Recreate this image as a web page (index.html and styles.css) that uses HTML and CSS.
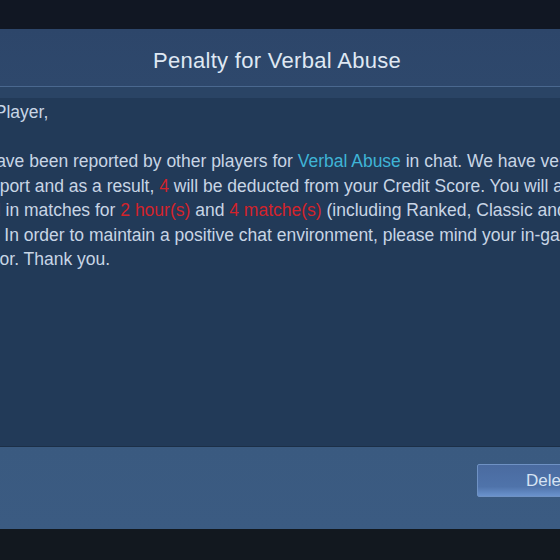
FILE: index.html
```html
<!DOCTYPE html>
<html lang="en">
<head>
    <meta charset="UTF-8">
    <meta name="viewport" content="width=device-width, initial-scale=1.0">
    <title>Penalty for Verbal Abuse</title>
    <link rel="stylesheet" href="styles.css">
</head>
<body>
    <div class="screen">
        <div class="top-bar"></div>
        <div class="dialog">
            <div class="dialog-header">
                <h1>Penalty for Verbal Abuse</h1>
            </div>
            <div class="dialog-body">
                <p class="line">Dear Player,</p>
                <p class="line blank">&nbsp;</p>
                <p class="line">You have been reported by other players for <span class="hl-blue">Verbal Abuse</span> in chat. We have verified</p>
                <p class="line">this report and as a result, <span class="hl-red">4</span> will be deducted from your Credit Score. You will also be</p>
                <p class="line">muted in matches for <span class="hl-red">2 hour(s)</span> and <span class="hl-red">4 matche(s)</span> (including Ranked, Classic and Brawl).</p>
                <p class="line shift-lg">Brawl). In order to maintain a positive chat environment, please mind your in-game</p>
                <p class="line shift-sm">behavior. Thank you.</p>
            </div>
            <div class="dialog-footer">
                <button class="delete-button">Delete</button>
            </div>
        </div>
        <div class="bottom-bar"></div>
    </div>
</body>
</html>
```

FILE: styles.css
```css
body {
    margin: 0;
    background-color: #11161f;
    font-family: "Liberation Sans", Arial, sans-serif;
    overflow: hidden;
}
.screen {
    width: 560px;
    height: 560px;
    overflow: hidden;
    display: flex;
    flex-direction: column;
}
.top-bar {
    height: 29px;
    background-color: #111723;
}
.dialog {
    width: 700px;
    margin-left: -73px;
    display: flex;
    flex-direction: column;
}
.dialog-header {
    height: 51px;
    padding-top: 6px;
    background: linear-gradient(#2d466a, #2e486c);
    border-bottom: 1px solid #4a688f;
    display: flex;
    align-items: center;
    justify-content: center;
}
.dialog-header h1 {
    margin: 0;
    font-size: 22px;
    font-weight: normal;
    color: #dfe8f3;
    letter-spacing: 0.3px;
}
.dialog-body {
    height: 346px;
    padding: 13px 0 0 25px;
    background: linear-gradient(#2a4465 0, #2a4465 11px, #223a58 11px, #223a58 100%);
    border-bottom: 1px solid #1c2f47;
    white-space: nowrap;
    overflow: hidden;
}
.line {
    margin: 0;
    font-size: 17.5px;
    line-height: 24.5px;
    color: #c8d5e5;
}
.shift-lg {
    text-indent: -7px;
}
.shift-sm {
    text-indent: -4px;
}
.hl-blue {
    color: #3fb4d6;
}
.hl-red {
    color: #d3232b;
}
.dialog-footer {
    height: 82px;
    background: linear-gradient(#3a5a80, #3b5b82);
    display: flex;
    justify-content: flex-end;
    align-items: flex-start;
    padding-right: 3px;
}
.delete-button {
    margin-top: 17px;
    width: 147px;
    height: 33px;
    border: 1px solid #6f92c4;
    border-radius: 2px;
    background: linear-gradient(#4a6ba0, #4f73aa 70%, #6a92cc);
    color: #d6e3f3;
    font-family: "Liberation Sans", Arial, sans-serif;
    font-size: 17px;
    padding: 0;
}
.bottom-bar {
    flex: 1;
    background-color: #12181f;
}
```
